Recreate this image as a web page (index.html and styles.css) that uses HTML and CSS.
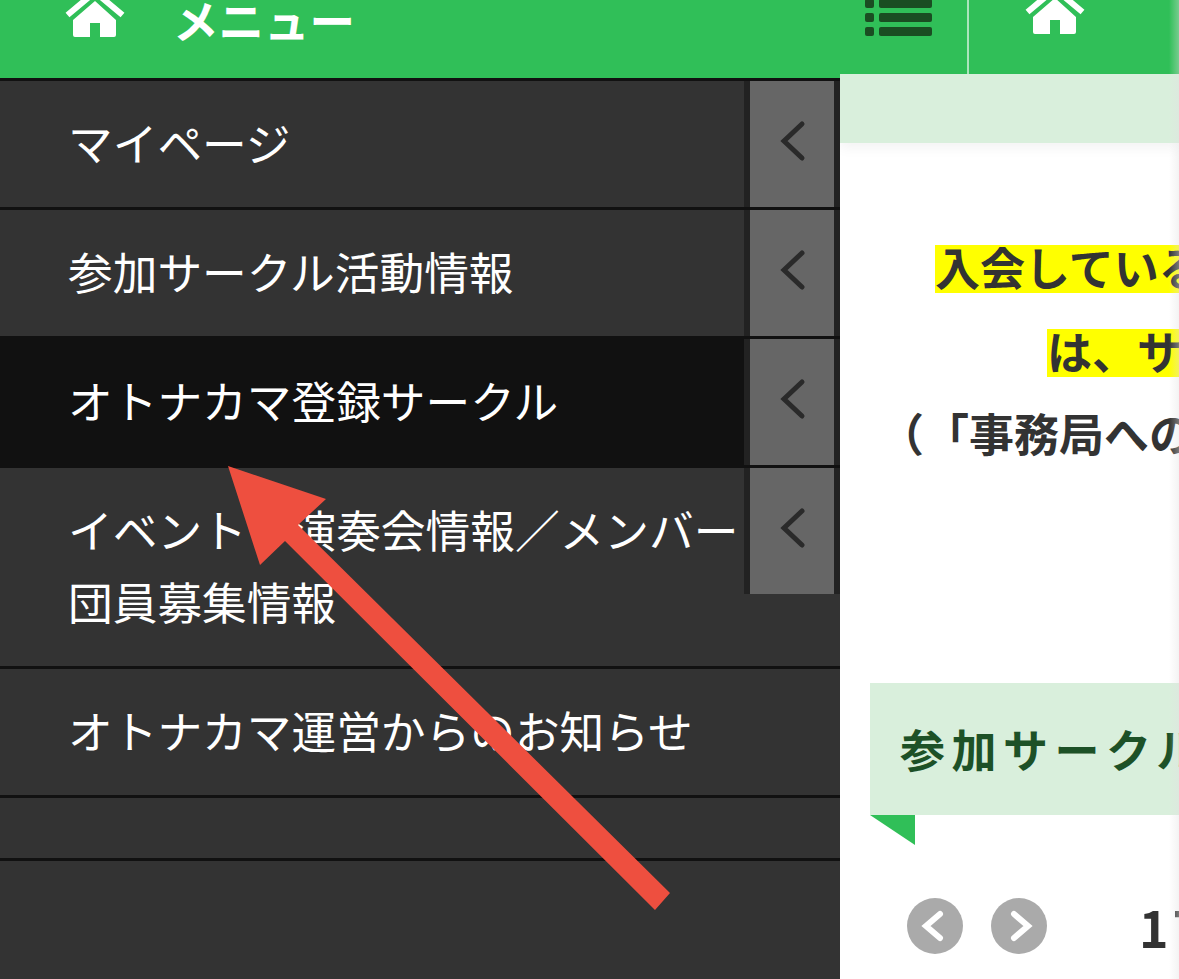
FILE: index.html

```html
<!DOCTYPE html>
<html lang="ja">
<head>
    <meta charset="UTF-8">
    <meta name="viewport" content="width=device-width, initial-scale=1.0">
    <title>メニュー</title>
    <link rel="stylesheet" href="styles.css">
</head>
<body>
    <div class="page">
        <aside class="sidebar">
            <div class="side-head">
                <svg class="home-icon" viewBox="0 0 60 50"><use href="#home"></use></svg>
                <span class="side-title">メニュー</span>
            </div>
            <nav class="side-menu">
                <div class="menu-item">
                    <a class="menu-label">マイページ</a>
                    <div class="menu-toggle"><svg class="chevron" viewBox="0 0 30 44"><use href="#chev"></use></svg></div>
                </div>
                <div class="menu-item">
                    <a class="menu-label">参加サークル活動情報</a>
                    <div class="menu-toggle"><svg class="chevron" viewBox="0 0 30 44"><use href="#chev"></use></svg></div>
                </div>
                <div class="menu-item active">
                    <a class="menu-label">オトナカマ登録サークル</a>
                    <div class="menu-toggle"><svg class="chevron" viewBox="0 0 30 44"><use href="#chev"></use></svg></div>
                </div>
                <div class="menu-item">
                    <a class="menu-label">イベント・演奏会情報／メンバー団員募集情報</a>
                    <div class="menu-toggle"><svg class="chevron" viewBox="0 0 30 44"><use href="#chev"></use></svg></div>
                </div>
                <div class="menu-item">
                    <a class="menu-label">オトナカマ運営からのお知らせ</a>
                </div>
                <div class="menu-item empty"></div>
            </nav>
        </aside>

        <main class="main">
            <div class="main-head">
                <div class="list-btn">
                    <svg class="list-icon" viewBox="0 0 67 40">
                        <rect x="0" y="0" width="9" height="9" rx="2"></rect>
                        <rect x="14" y="0" width="53" height="9" rx="2"></rect>
                        <rect x="0" y="14" width="9" height="9" rx="2"></rect>
                        <rect x="14" y="14" width="53" height="9" rx="2"></rect>
                        <rect x="0" y="28" width="9" height="9" rx="2"></rect>
                        <rect x="14" y="28" width="53" height="9" rx="2"></rect>
                    </svg>
                </div>
                <svg class="home-icon second" viewBox="0 0 60 50"><use href="#home"></use></svg>
            </div>
            <div class="sub-bar"></div>

            <div class="notice">
                <p class="line-one"><span class="hl">入会している</span></p>
                <p class="line-two"><span class="hl">は、サークル</span></p>
                <p class="line-three">（「事務局への</p>
            </div>

            <h2 class="section-head">参加サークル</h2>
            <div class="section-fold"></div>

            <div class="pager">
                <svg class="pager-btn" viewBox="0 0 56 56"><circle cx="28" cy="28" r="28"></circle><polyline points="33,16 19,28 33,40"></polyline></svg>
                <svg class="pager-btn" viewBox="0 0 56 56"><circle cx="28" cy="28" r="28"></circle><polyline points="23,16 37,28 23,40"></polyline></svg>
                <span class="pager-num">17</span>
            </div>
        </main>

        <div class="edge-shade"></div>

        <svg class="arrow" viewBox="0 0 1179 979">
            <polygon points="228,466 326,499 298,525 670,893 655,910 285,541 260,565"></polygon>
        </svg>
    </div>

    <svg class="defs" width="0" height="0">
        <defs>
            <g id="home">
                <polyline points="2.5,27 30,4 57.5,27" fill="none" stroke="#fff" stroke-width="6"></polyline>
                <path d="M8 32 L30 13 L51 32 V47 Q51 49 49 49 H35 V35 H25 V49 H10 Q8 49 8 47 Z" fill="#fff"></path>
            </g>
            <polyline id="chev" points="25,6 7,23 25,40" fill="none" stroke="#2a2a2a" stroke-width="5" stroke-linecap="round" stroke-linejoin="miter"></polyline>
        </defs>
    </svg>
</body>
</html>
```

FILE: styles.css

```css
body {
    margin: 0;
    font-family: "Noto Sans CJK JP", "Noto Sans", sans-serif;
    background-color: #fff;
    color: #333;
}

.page {
    position: relative;
    display: flex;
    width: 1179px;
    height: 979px;
    overflow: hidden;
}

/* left menu */
.sidebar {
    width: 840px;
    flex-shrink: 0;
    background-color: #333;
}

.side-head {
    display: flex;
    align-items: flex-end;
    height: 78px;
    padding: 0 0 40px 65px;
    box-sizing: border-box;
    background-color: #30bf58;
    overflow: hidden;
}

.home-icon {
    width: 60px;
    height: 50px;
    flex-shrink: 0;
}

.side-title {
    margin-left: 48px;
    margin-bottom: -3px;
    font-size: 45.5px;
    line-height: 44px;
    font-weight: bold;
    color: #fff;
}

.side-menu {
    border-top: 3px solid #111;
}

.menu-item {
    display: flex;
    align-items: flex-start;
    border-bottom: 3px solid #111;
    color: #fff;
}

.menu-item.active {
    background-color: #111;
}

.menu-item.empty {
    height: 60px;
}

.menu-label {
    flex: 1;
    padding: 25px 0 29px 68px;
    font-size: 44.7px;
    line-height: 72px;
    max-width: 680px;
}

.menu-toggle {
    display: flex;
    align-items: center;
    justify-content: center;
    width: 84px;
    height: 126px;
    margin-left: auto;
    background-color: #666;
    border-left: 6px solid #222;
    border-right: 6px solid #222;
}

.chevron {
    width: 30px;
    height: 44px;
    margin-bottom: 8px;
}

/* right side */
.main {
    flex: 1;
    min-width: 0;
    overflow: hidden;
    white-space: nowrap;
}

.main-head {
    display: flex;
    align-items: flex-end;
    height: 74px;
    background-color: #30bf58;
    overflow: hidden;
}

.list-btn {
    display: flex;
    align-items: flex-end;
    width: 129px;
    height: 74px;
    flex-shrink: 0;
    padding: 0 0 37px 25px;
    box-sizing: border-box;
    border-right: 2px solid rgba(255, 255, 255, 0.6);
}

.list-icon {
    width: 67px;
    height: 40px;
    flex-shrink: 0;
    margin-bottom: -2px;
    fill: #1a4d22;
}

.home-icon.second {
    margin: 0 0 39px 56px;
}

.sub-bar {
    height: 69px;
    background-color: #d9efdc;
    box-shadow: 0 5px 12px rgba(0, 0, 0, 0.05);
}

.notice {
    padding-top: 102px;
    font-size: 45px;
    font-weight: bold;
    color: #333;
    text-spacing-trim: space-all;
}

.notice p {
    display: flex;
    margin: 0 0 36px;
    line-height: 48px;
}

.line-one {
    padding-left: 95px;
}

.line-two {
    padding-left: 207px;
}

.notice .line-three {
    margin-top: -2px;
    padding-left: 39px;
    line-height: 44px;
}

.hl {
    padding-bottom: 4px;
    line-height: 44px;
    background-color: #ff0;
}

.section-head {
    margin: 228px 0 0 30px;
    padding: 0 0 0 30px;
    height: 132px;
    font-size: 45px;
    line-height: 132px;
    letter-spacing: 6.5px;
    font-weight: bold;
    color: #1d5127;
    background-color: #d9efdc;
}

.section-fold {
    width: 0;
    height: 0;
    margin-left: 30px;
    border-top: 30px solid #30bf58;
    border-left: 45px solid transparent;
}

.pager {
    display: flex;
    align-items: center;
    gap: 28px;
    margin-top: 53px;
    padding-left: 67px;
}

.pager-btn {
    width: 56px;
    height: 56px;
    flex-shrink: 0;
    fill: #aaa;
}

.pager-btn polyline {
    fill: none;
    stroke: #fff;
    stroke-width: 6;
    stroke-linecap: round;
}

.pager-num {
    margin-left: 64px;
    font-size: 50px;
    font-weight: bold;
    line-height: 56px;
    letter-spacing: 4px;
    color: #333;
}

/* things lying over the page */
.edge-shade {
    position: absolute;
    top: 0;
    right: 0;
    width: 10px;
    height: 100%;
    background: linear-gradient(to right, rgba(225, 225, 225, 0), rgba(225, 225, 225, 0.4));
}

.arrow {
    position: absolute;
    top: 0;
    left: 0;
    width: 1179px;
    height: 979px;
    fill: #ee4f3f;
}

.defs {
    position: absolute;
}
```
